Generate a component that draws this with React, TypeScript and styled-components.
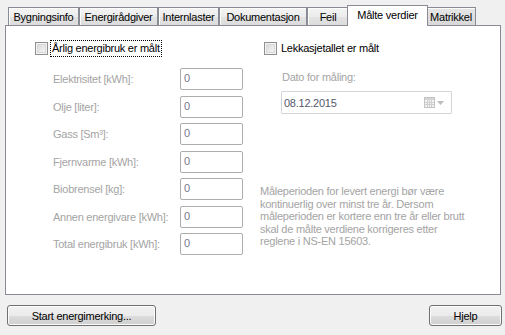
import React from "react";
import styled, { createGlobalStyle } from "styled-components";

const GlobalStyle = createGlobalStyle`
  html, body {
    margin: 0;
    padding: 0;
    background: #f0f0f0;
  }
  body {
    font-family: "Liberation Sans", Arial, sans-serif;
    font-size: 11px;
    letter-spacing: -0.25px;
    color: #000;
  }
  * {
    box-sizing: border-box;
  }
`;

const tabs = [
  { label: "Bygningsinfo", width: 71 },
  { label: "Energirådgiver", width: 79 },
  { label: "Internlaster", width: 61 },
  { label: "Dokumentasjon", width: 88 },
  { label: "Feil", width: 42 },
  { label: "Målte verdier", width: 77, active: true },
  { label: "Matrikkel", width: 50, hover: true },
];

const fields = [
  "Elektrisitet [kWh]:",
  "Olje [liter]:",
  "Gass [Sm³]:",
  "Fjernvarme [kWh]:",
  "Biobrensel [kg]:",
  "Annen energivare [kWh]:",
  "Total energibruk [kWh]:",
];

export default function App() {
  return (
    <>
      <GlobalStyle />
      <Window>
        <TabStrip>
          {tabs.map((t) => (
            <Tab
              key={t.label}
              $active={!!t.active}
              $dark={!!t.hover}
              $width={t.width}
            >
              {t.label}
            </Tab>
          ))}
        </TabStrip>
        <Panel>
          <LeftCol>
            <CheckRow>
              <CheckBox />
              <Caption $focused>Årlig energibruk er målt</Caption>
            </CheckRow>
            <FieldGrid>
              {fields.map((f) => (
                <React.Fragment key={f}>
                  <FieldLabel>{f}</FieldLabel>
                  <NumberBox>0</NumberBox>
                </React.Fragment>
              ))}
            </FieldGrid>
          </LeftCol>
          <RightCol>
            <CheckRow $indent={4}>
              <CheckBox />
              <Caption>Lekkasjetallet er målt</Caption>
            </CheckRow>
            <DateLabel>Dato for måling:</DateLabel>
            <DateBox>
              <DateText>08.12.2015</DateText>
              <CalendarIcon width="11" height="11" viewBox="0 0 11 11">
                <rect x="0.5" y="0.5" width="10" height="10" fill="#f4f4f4" stroke="#c4c4c4" />
                <rect x="1" y="1" width="9" height="2" fill="#d4d4d4" />
                <path
                  d="M1 5.5h9M1 7.5h9M3.5 3v7M5.5 3v7M7.5 3v7"
                  stroke="#cfcfcf"
                  strokeWidth="1"
                />
              </CalendarIcon>
              <DropArrow width="7" height="4" viewBox="0 0 7 4">
                <path d="M0 0h7L3.5 4z" fill="#bdbdbd" />
              </DropArrow>
            </DateBox>
            <Note>
              Måleperioden for levert energi bør være
              <br />
              kontinuerlig over minst tre år. Dersom
              <br />
              måleperioden er kortere enn tre år eller brutt
              <br />
              skal de målte verdiene korrigeres etter
              <br />
              reglene i NS-EN 15603.
            </Note>
          </RightCol>
        </Panel>
        <Footer>
          <Button $width={149}>Start energimerking...</Button>
          <Button $width={73}>Hjelp</Button>
        </Footer>
      </Window>
    </>
  );
}

const Window = styled.div`
  width: 505px;
  height: 335px;
  background: #f0f0f0;
  padding: 5px 4px 0 5px;
  display: flex;
  flex-direction: column;
  overflow: hidden;
`;

const TabStrip = styled.div`
  display: flex;
  align-items: flex-end;
  height: 21px;
  margin-bottom: -1px;
  padding-left: 3px;
  position: relative;
  z-index: 1;
`;

const Tab = styled.div<{ $active: boolean; $dark: boolean; $width: number }>`
  width: ${(p) => p.$width + (p.$active ? 4 : 0)}px;
  height: ${(p) => (p.$active ? 21 : 18)}px;
  margin: ${(p) => (p.$active ? "0 -2px 0 -2px" : "0 0 1px 0")};
  border: 1px solid #898c95;
  border-bottom: none;
  display: flex;
  align-items: center;
  justify-content: center;
  padding-top: ${(p) => (p.$active ? 0 : 1)}px;
  padding-bottom: ${(p) => (p.$active ? 3 : 0)}px;
  white-space: nowrap;
  background: ${(p) =>
    p.$active
      ? "#ffffff"
      : p.$dark
      ? "linear-gradient(to bottom, #e6e6e6 0%, #d8d8d8 100%)"
      : "linear-gradient(to bottom, #f4f4f4 0%, #ececec 50%, #e3e3e3 51%, #dcdcdc 100%)"};
  box-shadow: ${(p) => (p.$active ? "none" : "inset 1px 1px 0 #fcfcfc")};
  position: relative;
  z-index: ${(p) => (p.$active ? 2 : 1)};
`;

const Panel = styled.div`
  height: 270px;
  border: 1px solid #898c95;
  background: #ffffff;
  padding: 14px 0 0 29px;
  display: flex;
`;

const LeftCol = styled.div`
  width: 225px;
  display: flex;
  flex-direction: column;
`;

const RightCol = styled.div`
  display: flex;
  flex-direction: column;
`;

const CheckRow = styled.div<{ $indent?: number }>`
  display: flex;
  align-items: center;
  gap: 2px;
  height: 17px;
  padding-left: ${(p) => p.$indent ?? 0}px;
`;

const CheckBox = styled.span`
  width: 13px;
  height: 13px;
  border: 1px solid #8e8f8f;
  background: linear-gradient(135deg, #d2d2d2 0%, #efefef 70%, #f8f8f8 100%);
  box-shadow: inset 0 0 0 1px #f4f4f4, inset 0 0 0 2px #d9d9d9;
  flex: none;
`;

const Caption = styled.span<{ $focused?: boolean }>`
  height: 17px;
  line-height: 15px;
  padding: 0 1px;
  border: 1px dotted ${(p) => (p.$focused ? "#000" : "transparent")};
  white-space: nowrap;
`;

const FieldGrid = styled.div`
  margin-top: 11px;
  padding-left: 18px;
  display: grid;
  grid-template-columns: 127px 63px;
  grid-auto-rows: 22px;
  row-gap: 5.5px;
  align-items: center;
`;

const FieldLabel = styled.span`
  color: #a4a4a4;
  white-space: nowrap;
`;

const NumberBox = styled.div`
  height: 22px;
  border: 1px solid #adadad;
  border-radius: 2px;
  background: #ffffff;
  color: #77798a;
  padding: 3px 0 0 3px;
`;

const DateLabel = styled.div`
  margin-top: 14px;
  padding-left: 22px;
  line-height: 13px;
  color: #a4a4a4;
`;

const DateBox = styled.div`
  margin: 7px 0 0 21px;
  width: 171px;
  height: 23px;
  border: 1px solid #d2d5da;
  border-radius: 1px;
  background: #ffffff;
  display: flex;
  align-items: center;
  padding: 0 7px 0 2px;
`;

const DateText = styled.span`
  flex: 1;
  color: #55586a;
`;

const CalendarIcon = styled.svg`
  display: block;
  margin-right: 2px;
`;

const DropArrow = styled.svg`
  display: block;
`;

const Note = styled.p`
  margin: 71px 0 0 0;
  line-height: 12.5px;
  color: #a4a4a4;
  white-space: nowrap;
`;

const Footer = styled.div`
  margin: 10px -1px 0 2px;
  display: flex;
  justify-content: space-between;
`;

const Button = styled.button<{ $width: number }>`
  width: ${(p) => p.$width}px;
  height: 21px;
  border: 1px solid #707070;
  border-radius: 3px;
  background: linear-gradient(to bottom, #f2f2f2 0%, #ebebeb 50%, #dddddd 51%, #cfcfcf 100%);
  box-shadow: inset 0 0 0 1px #fbfbfb;
  font-family: "Liberation Sans", Arial, sans-serif;
  font-size: 11px;
  letter-spacing: -0.25px;
  color: #000;
  padding: 0;
`;
